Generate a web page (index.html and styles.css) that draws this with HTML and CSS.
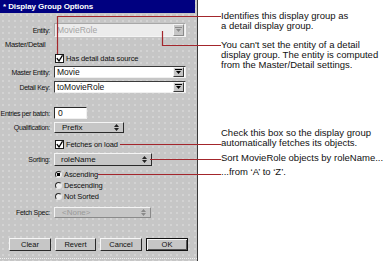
FILE: index.html
```html
<!DOCTYPE html>
<html lang="en">
<head>
    <meta charset="UTF-8">
    <title>Display Group Options</title>
    <link rel="stylesheet" href="styles.css">
</head>
<body>
<div class="page">
    <div class="panel">
        <div class="titlebar">* Display Group Options</div>

        <div class="row r-entity">
            <span class="label">Entity:</span>
            <div class="combo disabled">
                <span class="combo-text">MovieRole</span>
                <span class="combo-btn"><svg width="7" height="6" viewBox="0 0 7 6"><path d="M0 0.5H7" stroke="#8a8a8a"/><path d="M1 2H6L3.5 5Z" fill="#8a8a8a"/></svg></span>
            </div>
        </div>

        <div class="section">Master/Detail</div>

        <div class="row r-has">
            <span class="check"><svg width="7" height="7" viewBox="0 0 7 7"><path d="M0.8 3.2L3 6L6.5 0.3" fill="none" stroke="#000" stroke-width="1.3"/></svg></span>
            <span class="opt">Has detail data source</span>
        </div>

        <div class="row r-master">
            <span class="label">Master Entity:</span>
            <div class="combo">
                <span class="combo-text">Movie</span>
                <span class="combo-btn"><svg width="7" height="6" viewBox="0 0 7 6"><path d="M0 0.5H7" stroke="#000"/><path d="M1 2H6L3.5 5Z" fill="#000"/></svg></span>
            </div>
        </div>

        <div class="row r-detail">
            <span class="label">Detail Key:</span>
            <div class="combo">
                <span class="combo-text">toMovieRole</span>
                <span class="combo-btn"><svg width="7" height="6" viewBox="0 0 7 6"><path d="M0 0.5H7" stroke="#000"/><path d="M1 2H6L3.5 5Z" fill="#000"/></svg></span>
            </div>
        </div>

        <div class="row r-entries">
            <span class="label">Entries per batch:</span>
            <div class="textfield">0</div>
        </div>

        <div class="row r-qual">
            <span class="label">Qualification:</span>
            <div class="popup w-qual">
                <span class="ptext">Prefix</span>
                <svg width="5" height="7" viewBox="0 0 5 7"><path d="M2.5 0L5 3H0Z M0 4H5L2.5 7Z" fill="#222"/></svg>
            </div>
        </div>

        <div class="row r-fetch">
            <span class="check"><svg width="7" height="7" viewBox="0 0 7 7"><path d="M0.8 3.2L3 6L6.5 0.3" fill="none" stroke="#000" stroke-width="1.3"/></svg></span>
            <span class="opt">Fetches on load</span>
        </div>

        <div class="row r-sort">
            <span class="label">Sorting:</span>
            <div class="popup w-sort">
                <span class="ptext">roleName</span>
                <svg width="5" height="7" viewBox="0 0 5 7"><path d="M2.5 0L5 3H0Z M0 4H5L2.5 7Z" fill="#222"/></svg>
            </div>
        </div>

        <div class="row r-radio r-asc">
            <span class="radio on"></span>
            <span class="opt">Ascending</span>
        </div>
        <div class="row r-radio">
            <span class="radio"></span>
            <span class="opt">Descending</span>
        </div>
        <div class="row r-radio">
            <span class="radio"></span>
            <span class="opt">Not Sorted</span>
        </div>

        <div class="row r-spec">
            <span class="label">Fetch Spec:</span>
            <div class="popup w-spec disabled">
                <span class="ptext">&lt;None&gt;</span>
                <svg width="5" height="7" viewBox="0 0 5 7"><path d="M2.5 0L5 3H0Z M0 4H5L2.5 7Z" fill="#8a8a8a"/></svg>
            </div>
        </div>

        <div class="buttons">
            <span class="btn">Clear</span>
            <span class="btn narrow">Revert</span>
            <span class="btn">Cancel</span>
            <span class="btn default">OK</span>
        </div>

        <div class="bottom-rule"></div>
    </div>

    <div class="notes">
        <p class="note n1">Identifies this display group as<br>a detail display group.</p>
        <p class="note n2">You can't set the entity of a detail<br>display group. The entity is computed<br>from the Master/Detail settings.</p>
        <p class="note n3">Check this box so the display group<br>automatically fetches its objects.</p>
        <p class="note n4">Sort MovieRole objects by roleName...</p>
        <p class="note n5">...from ‘A’ to ‘Z’.</p>
    </div>

    <!-- callout leaders -->
    <svg class="leaders" width="386" height="261" viewBox="0 0 386 261">
        <path d="M57.5 54V16.5H221" />
        <path d="M162.5 31V45.5H221" />
        <path d="M120 144.5H221" />
        <path d="M150 159.5H221" />
        <path d="M98 174.5H221" />
    </svg>
</div>
</body>
</html>
```

FILE: styles.css
```css
* {
    box-sizing: border-box;
}
body {
    margin: 0;
    background-color: #ffffff;
    font-family: "Liberation Sans", Arial, sans-serif;
    color: #111;
}
.page {
    position: relative;
    display: flex;
    width: 386px;
    height: 261px;
    overflow: hidden;
}
.panel {
    flex: none;
    display: flex;
    flex-direction: column;
    width: 198px;
    height: 261px;
    background-color: #c6c6c6;
    background-image: radial-gradient(circle, #d8d8d8 0.6px, transparent 1px);
    background-size: 6px 6px;
    border-right: 1px solid #3a3a3a;
}
.titlebar {
    height: 13px;
    margin-right: 2px;
    padding-left: 3px;
    background-color: #000080;
    color: #ffffff;
    font-size: 8px;
    font-weight: bold;
    line-height: 13px;
    letter-spacing: -0.1px;
}
.row {
    flex: none;
    display: flex;
    align-items: center;
}
.label {
    width: 50px;
    margin-right: 4px;
    text-align: right;
    font-size: 7px;
    letter-spacing: -0.3px;
    white-space: nowrap;
}
.section {
    margin-top: 3px;
    height: 9px;
    padding-left: 5px;
    font-size: 7.5px;
    line-height: 9px;
    letter-spacing: -0.3px;
}
.opt {
    font-size: 7.5px;
    letter-spacing: -0.1px;
    white-space: nowrap;
}

/* row spacing */
.r-entity { margin-top: 10px; height: 14px; }
.r-has { margin-top: 4px; height: 10px; }
.r-master { margin-top: 3px; height: 12px; }
.r-detail { margin-top: 3px; height: 12px; }
.r-entries { margin-top: 14px; height: 12px; }
.r-qual { margin-top: 3px; height: 11px; }
.r-fetch { margin-top: 6px; height: 10px; }
.r-sort { margin-top: 4px; height: 13px; }
.r-radio { margin-top: 2px; height: 9px; }
.r-asc { margin-top: 4px; }
.r-spec { margin-top: 6px; height: 11px; }

/* combo box */
.combo {
    display: flex;
    width: 132px;
    height: 100%;
    background-color: #ffffff;
    border: 1px solid;
    border-color: #3a3a3a #f0f0f0 #f0f0f0 #3a3a3a;
}
.combo-text {
    flex: 1;
    padding-left: 2px;
    font-size: 8.5px;
    line-height: 10px;
    white-space: nowrap;
}
.combo-btn {
    display: flex;
    align-items: center;
    justify-content: center;
    width: 11px;
    margin: 0 1px 0 0;
    background-color: #c6c6c6;
    border: 1px solid;
    border-color: #f4f4f4 #3a3a3a #3a3a3a #f4f4f4;
}
.combo.disabled {
    background-color: #ececec;
    border-color: #a8a8a8 #f4f4f4 #f4f4f4 #a8a8a8;
}
.combo.disabled .combo-text {
    color: #a4a4a4;
    line-height: 12px;
}
.combo.disabled .combo-btn {
    border-color: #f4f4f4 #8a8a8a #8a8a8a #f4f4f4;
}

/* plain text field */
.textfield {
    width: 33px;
    height: 100%;
    padding-left: 3px;
    background-color: #ffffff;
    border: 1px solid;
    border-color: #2a2a2a #f0f0f0 #f0f0f0 #2a2a2a;
    font-size: 8.5px;
    line-height: 10px;
}

/* pop-up button */
.popup {
    display: flex;
    align-items: center;
    height: 100%;
    padding: 0 4px 0 7px;
    background-color: #c6c6c6;
    border: 1px solid;
    border-color: #f4f4f4 #2a2a2a #2a2a2a #f4f4f4;
    font-size: 8px;
}
.popup .ptext {
    flex: 1;
    white-space: nowrap;
}
.w-qual { width: 70px; }
.w-sort { width: 98px; padding-left: 6px; }
.w-spec { width: 97px; }
.popup.disabled {
    border-color: #f4f4f4 #8a8a8a #8a8a8a #f4f4f4;
    color: #9a9a9a;
}

/* check box and radio */
.check {
    display: flex;
    align-items: center;
    justify-content: center;
    width: 9px;
    height: 9px;
    margin: 0 2px 0 55px;
    background-color: #ffffff;
    border: 1px solid #1a1a1a;
}
.radio {
    width: 7px;
    height: 7px;
    margin: 0 2px 0 55px;
    border-radius: 50%;
    background-color: #eeeeee;
    border: 1px solid;
    border-color: #2a2a2a #e8e8e8 #e8e8e8 #2a2a2a;
}
.radio.on {
    background-image: radial-gradient(circle, #000 1.6px, transparent 2px);
}

/* buttons */
.buttons {
    flex: none;
    display: flex;
    gap: 4px;
    margin-top: 20px;
    padding-left: 9px;
    height: 13px;
}
.btn {
    width: 42px;
    height: 13px;
    background-color: #c6c6c6;
    border: 1px solid;
    border-color: #f6f6f6 #2a2a2a #2a2a2a #f6f6f6;
    font-size: 7.5px;
    line-height: 11px;
    text-align: center;
}
.btn.narrow {
    width: 41px;
}
.btn.default {
    border: 1px solid #111;
    box-shadow: inset 1px 1px 0 #f6f6f6, inset -1px -1px 0 #555;
}
.bottom-rule {
    margin-top: 7px;
    border-top: 1px dotted #f0f0f0;
}

/* annotations */
.notes {
    flex: 1;
    padding-left: 23px;
}
.note {
    margin: 0;
    font-size: 9.5px;
    line-height: 10px;
    white-space: nowrap;
    color: #111;
}
.n1 { margin-top: 11px; }
.n2 { margin-top: 9px; }
.n3 { margin-top: 58px; }
.n4 { margin-top: 5px; }
.n5 { margin-top: 4px; }

.leaders {
    position: absolute;
    top: 0;
    left: 0;
    pointer-events: none;
}
.leaders path {
    fill: none;
    stroke: #a3262c;
    stroke-width: 1.2;
}
```
